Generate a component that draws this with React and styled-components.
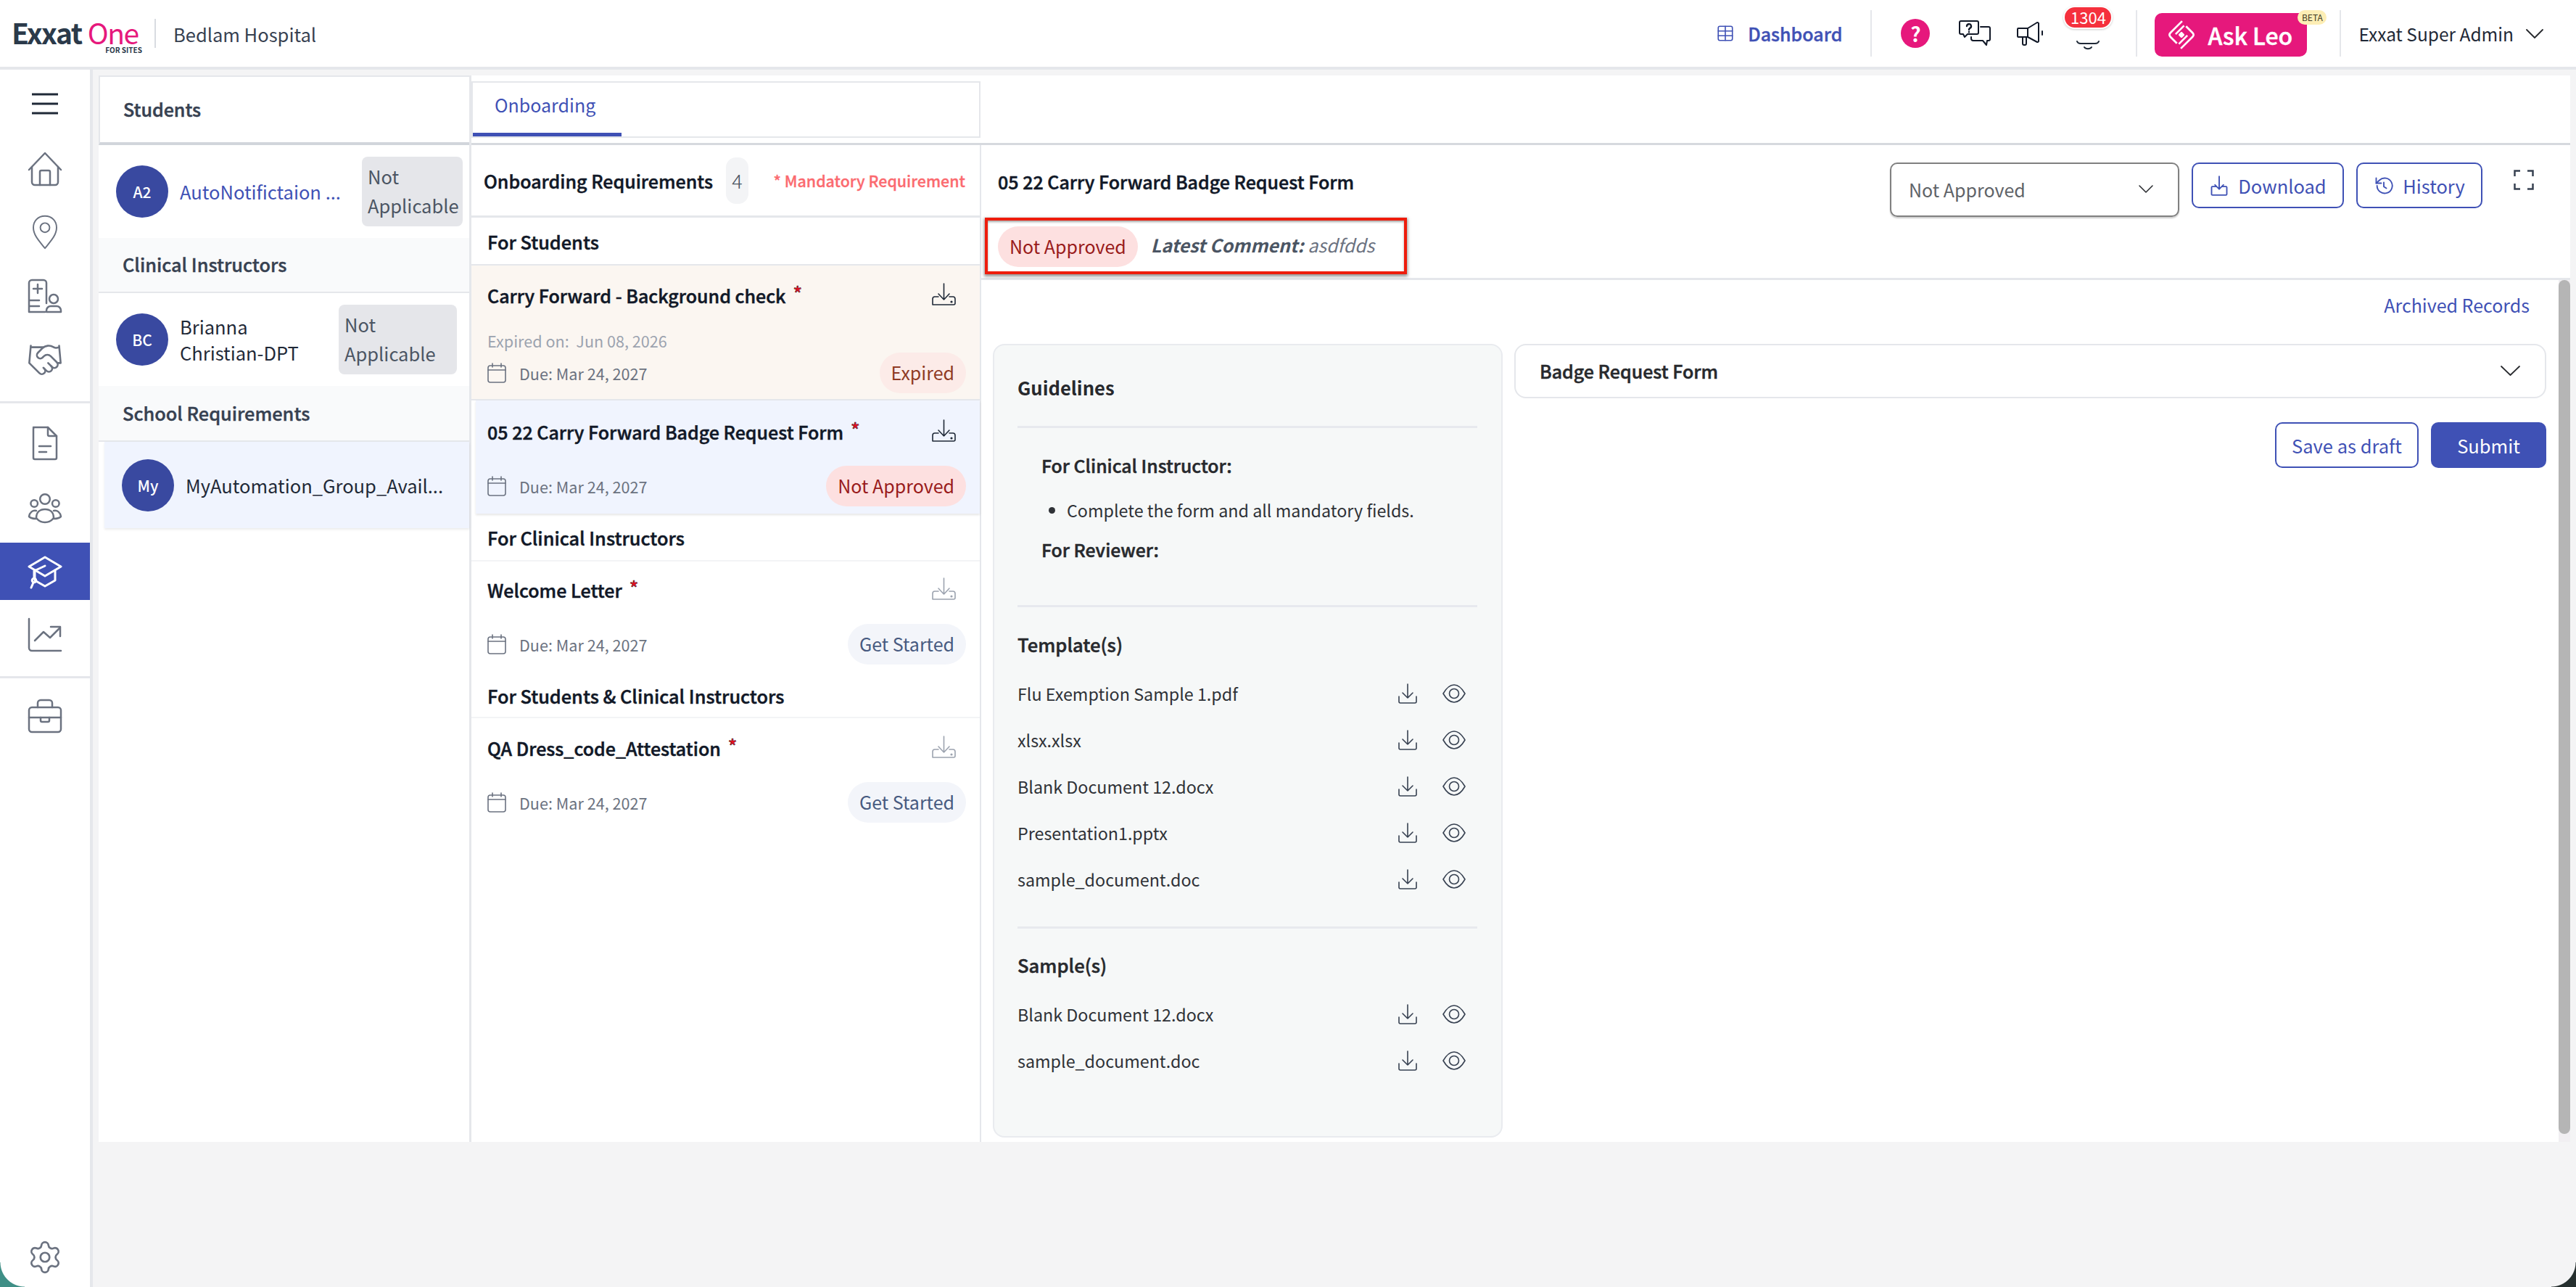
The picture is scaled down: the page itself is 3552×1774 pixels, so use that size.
import React from "react"
import styled, { createGlobalStyle } from "styled-components"
import { Handshake, Settings, Table } from "lucide-react"

const font = `"Noto Sans CJK SC", "Liberation Sans", sans-serif`

const GlobalStyle = createGlobalStyle`
  html, body { margin: 0; padding: 0; background: #f3f3f4; }
  * { box-sizing: border-box; }
  body { font-family: ${font}; color: #111827; }
`

const Page = styled.div`
  width: 3552px;
  height: 1774px;
  overflow: hidden;
  position: relative;
  background: #f4f4f5;
  display: flex;
  flex-direction: column;
`

/* ---------- top bar ---------- */
const TopBar = styled.header`
  height: 96px;
  flex: none;
  background: #fff;
  border-bottom: 4px solid #e5e7eb;
  display: flex;
  align-items: center;
  padding: 0 45px 0 16px;
`
const Logo = styled.div`
  position: relative;
  width: 180px;
  height: 34px;
  margin-bottom: 5px;
  display: flex;
  align-items: center;
  font-size: 39px;
  line-height: 34px;
  letter-spacing: -1.5px;
  white-space: nowrap;
`
const LogoDark = styled.span`
  color: #2b3a4a;
  font-weight: 600;
`
const LogoPink = styled.span`
  color: #e6187c;
  font-weight: 400;
  margin-left: 8px;
`
const LogoSub = styled.span`
  position: absolute;
  right: 0;
  top: 37px;
  font-size: 10px;
  line-height: 10px;
  letter-spacing: 0;
  color: #2b3a4a;
  font-weight: 600;
`
const LogoBar = styled.div`
  width: 2px;
  height: 40px;
  background: #d9dce1;
  margin: 0 24px 0 17px;
`
const HospitalName = styled.div`
  font-size: 25.5px;
  color: #374151;
`
const RightGroup = styled.div`
  margin-left: auto;
  display: flex;
  align-items: center;
`
const DashLink = styled.div`
  display: flex;
  align-items: center;
  gap: 18px;
  color: #3f51b5;
  font-size: 25px;
  font-weight: 500;
  -webkit-text-stroke: 0.4px #3f51b5;
`
const VLine = styled.div`
  width: 2px;
  height: 64px;
  background: #e5e7eb;
  margin: ${p => p.$m || "0"};
`
const HelpDot = styled.div`
  width: 40px;
  height: 40px;
  border-radius: 50%;
  background: #e6187c;
  color: #fff;
  font-weight: 700;
  font-size: 28px;
  line-height: 40px;
  text-align: center;
`
const IconSlot = styled.div`
  display: flex;
  margin-left: ${p => p.$ml}px;
`
const BellWrap = styled.div`
  position: relative;
  width: 64px;
  height: 60px;
  margin-left: 30px;
  margin-top: -12px;
  display: flex;
  justify-content: center;
  align-items: flex-end;
`
const CountBadge = styled.div`
  position: absolute;
  top: -2px;
  left: -2px;
  width: 68px;
  height: 32px;
  border-radius: 16px;
  background: #f5303d;
  border: 2px solid #fff;
  color: #fff;
  font-size: 22px;
  line-height: 27px;
  text-align: center;
  box-shadow: 0 1px 3px rgba(0,0,0,.2);
`
const LeoButton = styled.div`
  position: relative;
  width: 210px;
  height: 60px;
  margin-top: 4px;
  border-radius: 10px;
  background: #e6187c;
  color: #fff;
  display: flex;
  align-items: center;
  padding-left: 19px;
  gap: 18px;
  font-size: 32px;
  font-weight: 500;
  -webkit-text-stroke: 0.5px #fff;
`
const BetaTag = styled.span`
  position: absolute;
  top: -4px;
  right: -27px;
  width: 40px;
  height: 20px;
  border-radius: 10px;
  background: #fdeeb5;
  color: #3f3a22;
  font-size: 12px;
  line-height: 20px;
  text-align: center;
  font-weight: 400;
  -webkit-text-stroke: 0;
`
const AdminName = styled.div`
  display: flex;
  align-items: center;
  gap: 17px;
  font-size: 24.5px;
  color: #1f2937;
`

/* ---------- shell ---------- */
const Shell = styled.div`
  flex: 1;
  display: flex;
  min-height: 0;
`
const SideNav = styled.nav`
  width: 128px;
  flex: none;
  background: #fff;
  border-right: 4px solid #e5e7eb;
  display: flex;
  flex-direction: column;
  color: #6b7280;
`
const NavItem = styled.div`
  height: ${p => p.$h}px;
  flex: none;
  display: flex;
  align-items: center;
  justify-content: center;
  background: ${p => (p.$active ? "#3f51b5" : "transparent")};
  color: ${p => (p.$active ? "#fff" : "#6b7280")};
  margin-top: ${p => p.$mt || 0}px;
`
const NavRule = styled.div`
  height: 3px;
  flex: none;
  background: #e5e7eb;
  margin-top: ${p => p.$mt}px;
`
const NavSpacer = styled.div`
  flex: 1;
`
const Panel = styled.main`
  margin: 8px 8px 0 8px;
  flex: 1;
  height: 1470px;
  background: #fff;
  display: flex;
`

/* ---------- left list ---------- */
const ListCol = styled.section`
  width: 514px;
  flex: none;
  border-right: 3px solid #e5e7eb;
  display: flex;
  flex-direction: column;
`
const ListHead = styled.div`
  height: 96px;
  flex: none;
  border: 2px solid #e5e7eb;
  border-bottom: 4px solid #d1d5db;
  border-right: 0;
  display: flex;
  align-items: center;
  padding: 0 0 2px 32px;
  font-size: 25px;
  font-weight: 500;
  color: #374151;
  -webkit-text-stroke: 0.5px #374151;
`
const PersonRow = styled.div`
  height: ${p => p.$h}px;
  flex: none;
  display: flex;
  align-items: center;
  padding: 0 ${p => p.$pr || 9}px 0 24px;
  margin-left: ${p => (p.$selected ? 8 : 0)}px;
  background: ${p => (p.$selected ? "#f0f4fe" : "#fff")};
  box-shadow: ${p => (p.$selected ? "0 2px 3px rgba(0,0,0,.08)" : "none")};
`
const Avatar = styled.div`
  width: 72px;
  height: 72px;
  flex: none;
  border-radius: 50%;
  background: #3949a0;
  color: #fff;
  display: flex;
  align-items: center;
  justify-content: center;
  font-size: 21px;
  font-weight: 500;
  margin-right: 16px;
`
const PersonName = styled.div`
  flex: 1;
  min-width: 0;
  font-size: 25.5px;
  line-height: 36px;
  color: ${p => (p.$link ? "#3f51b5" : "#1f2937")};
  white-space: nowrap;
`
const GreyTag = styled.div`
  width: ${p => p.$w}px;
  height: 96px;
  flex: none;
  background: #e5e6ea;
  border-radius: 8px;
  padding: 7px 8px;
  font-size: 25.5px;
  line-height: 40px;
  color: #4b5563;
`
const GroupLabel = styled.div`
  height: ${p => p.$h}px;
  flex: none;
  background: #f9fafb;
  border-bottom: 2px solid #e5e7eb;
  display: flex;
  align-items: center;
  padding: 0 0 2px 33px;
  font-size: 25.3px;
  font-weight: 500;
  color: #374151;
  -webkit-text-stroke: 0.4px #374151;
`

/* ---------- tabs ---------- */
const RightCol = styled.div`
  flex: 1;
  min-width: 0;
  display: flex;
  flex-direction: column;
`
const TabBand = styled.div`
  height: 96px;
  flex: none;
  padding-top: 8px;
  border-bottom: 3px solid #d6d9de;
`
const TabBox = styled.div`
  width: 702px;
  height: 78px;
  border: 2px solid #e5e7eb;
`
const Tab = styled.div`
  width: 205px;
  height: 74px;
  border-bottom: 5px solid #3f51b5;
  padding: 10px 0 0 30px;
  font-size: 25px;
  line-height: 40px;
  color: #3f51b5;
`
const Columns = styled.div`
  flex: 1;
  min-height: 0;
  display: flex;
`

/* ---------- requirements ---------- */
const ReqCol = styled.section`
  width: 703px;
  flex: none;
  border-right: 2px solid #e5e7eb;
  display: flex;
  flex-direction: column;
`
const ReqHead = styled.div`
  height: 100px;
  flex: none;
  border-bottom: 3px solid #e5e7eb;
  display: flex;
  align-items: center;
  padding: 0 20px 0 17px;
  white-space: nowrap;
`
const ReqTitle = styled.div`
  font-size: 25px;
  font-weight: 500;
  color: #111827;
  -webkit-text-stroke: 0.5px #111827;
`
const CountChip = styled.div`
  width: 31px;
  height: 64px;
  margin-left: 18px;
  border-radius: 14px;
  background: #f3f4f6;
  color: #4b5563;
  font-size: 27px;
  font-weight: 300;
  line-height: 64px;
  text-align: center;
`
const Mandatory = styled.div`
  margin-left: auto;
  font-size: 21.4px;
  color: #fb6a6f;
  font-weight: 500;
  -webkit-text-stroke: 0.3px #fb6a6f;
`
const ReqGroup = styled.div`
  height: ${p => p.$h}px;
  flex: none;
  border-bottom: 2px solid ${p => p.$line || "#f3f4f6"};
  display: flex;
  align-items: center;
  padding: ${p => p.$pt || 0}px 0 0 22px;
  font-size: 25.3px;
  font-weight: 500;
  color: #111827;
  -webkit-text-stroke: 0.5px #111827;
`
const ReqCard = styled.div`
  flex: none;
  padding: ${p => p.$pt}px 19px ${p => p.$pb}px ${p => (p.$selected ? 16 : 22)}px;
  background: ${p => p.$bg || "#fff"};
  margin-left: ${p => (p.$selected ? 6 : 0)}px;
  border-bottom: ${p => (p.$line ? "2px solid #e5e7eb" : "0")};
  box-shadow: ${p => (p.$selected ? "0 2px 3px rgba(0,0,0,.1)" : "none")};
`
const CardTop = styled.div`
  height: 48px;
  display: flex;
  align-items: center;
  justify-content: space-between;
  padding-right: 14px;
`
const CardTitle = styled.div`
  font-size: 25px;
  font-weight: 500;
  color: #111827;
  -webkit-text-stroke: 0.5px #111827;
`
const Star = styled.span`
  color: #ee0f1f;
  margin-left: 10px;
  font-size: 26px;
  position: relative;
  top: -3px;
`
const ExpiredOn = styled.div`
  margin-top: 24px;
  margin-bottom: -24px;
  font-size: 21.6px;
  line-height: 32px;
  color: #9ca3af;
`
const CardFoot = styled.div`
  margin-top: 24px;
  height: 56px;
  display: flex;
  align-items: center;
  justify-content: space-between;
`
const DueDate = styled.div`
  display: flex;
  align-items: center;
  gap: 18px;
  font-size: 21.6px;
  color: #6b7280;
`
const StatusPill = styled.div`
  height: 56px;
  padding: 0 16px;
  border-radius: 28px;
  background: ${p => p.$bg};
  color: ${p => p.$color};
  font-size: 25px;
  line-height: 54px;
  white-space: nowrap;
`

/* ---------- detail ---------- */
const DetailCol = styled.section`
  flex: 1;
  min-width: 0;
  position: relative;
  display: flex;
  flex-direction: column;
`
const DetailHead = styled.div`
  height: 186px;
  flex: none;
  border-bottom: 3px solid #e5e7eb;
  display: flex;
  justify-content: space-between;
  padding: 0 50px 0 5px;
`
const HeadLeft = styled.div`
  display: flex;
  flex-direction: column;
`
const DetailTitle = styled.div`
  height: 100px;
  padding-left: 18px;
  display: flex;
  align-items: center;
  font-size: 25px;
  font-weight: 500;
  color: #111827;
  -webkit-text-stroke: 0.5px #111827;
`
const Outline = styled.div`
  width: 582px;
  height: 78px;
  border: 4px solid #ee1c0c;
  box-shadow: 0 2px 4px 1px rgba(60,60,60,.55), inset 0 2px 3px rgba(60,60,60,.45);
  padding: 8px 0 0 14px;
  display: flex;
  gap: 18px;
`
const LatestComment = styled.div`
  font-size: 25px;
  line-height: 50px;
  font-style: italic;
  color: #6b7280;
  white-space: nowrap;
  b {
    font-weight: 700;
    color: #4b5563;
  }
`
const HeadRight = styled.div`
  display: flex;
  align-items: flex-start;
  padding-top: 24px;
  gap: 17px;
`
const SelectBox = styled.div`
  width: 399px;
  height: 75px;
  border: 2px solid #808080;
  border-radius: 10px;
  box-shadow: 0 2px 2px rgba(0,0,0,.2);
  display: flex;
  align-items: center;
  justify-content: space-between;
  padding: 0 34px 2px 24px;
  font-size: 25px;
  color: #5f6368;
`
const OutlineBtn = styled.div`
  width: ${p => p.$w}px;
  height: 63px;
  border: 2px solid #3f51b5;
  border-radius: 10px;
  display: flex;
  align-items: center;
  justify-content: center;
  gap: 12px;
  color: #3f51b5;
  font-size: 25.5px;
  background: #fff;
`
const ExpandIcon = styled.div`
  margin: 10px 0 0 26px;
  display: flex;
  color: #374151;
`
const DetailBody = styled.div`
  flex: 1;
  min-height: 0;
  padding: 0 33px 0 16px;
  display: flex;
  flex-direction: column;
`
const ArchiveRow = styled.div`
  height: 88px;
  flex: none;
  padding: 12px 23px 0 0;
  text-align: right;
  font-size: 25px;
  line-height: 44px;
  color: #3f51b5;
`
const BodyGrid = styled.div`
  display: flex;
  gap: 16px;
  align-items: flex-start;
`
const GuideCard = styled.aside`
  width: 703px;
  height: 1094px;
  flex: none;
  background: #f6f8f8;
  border: 2px solid #e9ebef;
  border-radius: 16px;
  padding: 33px 33px 0 32px;
`
const GuideHeading = styled.div`
  font-size: 25.6px;
  line-height: ${p => p.$lh || 40}px;
  font-weight: ${p => (p.$strong ? 700 : 500)};
  -webkit-text-stroke: ${p => (p.$strong ? 0 : "0.5px #27292d")};
  color: #27292d;
  margin-top: ${p => p.$mt || 0}px;
  margin-bottom: ${p => p.$mb || 0}px;
`
const GuideRule = styled.div`
  height: 3px;
  background: #e7e9ee;
  margin-top: ${p => p.$mt || 0}px;
`
const GuideNote = styled.div`
  padding-left: 33px;
  font-size: 24.8px;
  line-height: 40px;
  font-weight: 500;
  -webkit-text-stroke: 0.5px #27292d;
  color: #27292d;
  margin-top: ${p => p.$mt}px;
`
const GuideBullet = styled.ul`
  margin: 22px 0 0;
  padding: 0 0 0 68px;
  font-size: 23.3px;
  line-height: 40px;
  color: #2f3237;
`
const FileList = styled.div`
  margin-top: 16px;
`
const FileRow = styled.div`
  height: 64px;
  display: flex;
  align-items: center;
  font-size: 23.3px;
  color: #2f3237;
`
const FileName = styled.div`
  flex: 1;
`
const FileActions = styled.div`
  display: flex;
  align-items: center;
  gap: 35px;
  padding-right: 16px;
  color: #374151;
`
const FormCol = styled.div`
  flex: 1;
  min-width: 0;
`
const Accordion = styled.div`
  height: 75px;
  border: 2px solid #e5e7eb;
  border-radius: 16px;
  display: flex;
  align-items: center;
  justify-content: space-between;
  padding: 0 34px 2px 33px;
  font-size: 25px;
  font-weight: 500;
  color: #27292d;
  -webkit-text-stroke: 0.5px #27292d;
`
const FormActions = styled.div`
  margin-top: 33px;
  display: flex;
  justify-content: flex-end;
  gap: 17px;
`
const SubmitBtn = styled.div`
  width: 159px;
  height: 63px;
  border-radius: 10px;
  background: #3f51b5;
  color: #fff;
  display: flex;
  align-items: center;
  justify-content: center;
  font-size: 25.5px;
`
const ScrollTrack = styled.div`
  position: absolute;
  top: 186px;
  right: 0;
  bottom: 0;
  width: 16px;
  background: #f1eff2;
`
const ScrollThumb = styled.div`
  height: 1177px;
  border-radius: 8px;
  background: #b5b5b5;
`
const WindowCorner = styled.div`
  position: absolute;
  bottom: 0;
  ${p => (p.$right ? "right: 0;" : "left: 0;")}
  width: 34px;
  height: 34px;
  background: radial-gradient(circle at ${p => (p.$right ? "top left" : "top right")}, transparent 33px, ${p => p.$color} 34px);
`

/* ---------- drawn icons ---------- */
const Ico = ({ size = 48, w, h, box = "0 0 24 24", sw = 1.25, children }) => (
  <svg width={w || size} height={h || size} viewBox={box} fill="none" stroke="currentColor" strokeWidth={sw} strokeLinecap="round" strokeLinejoin="round">
    {children}
  </svg>
)
const Chevron = ({ w = 24, h = 13, sw = 1.8 }) => (
  <svg width={w} height={h} viewBox={`0 0 ${w} ${h}`} fill="none" stroke="#27292d" strokeWidth={sw} strokeLinecap="round" strokeLinejoin="round">
    <path d={`M1 1 L${w / 2} ${h - 1} L${w - 1} 1`} />
  </svg>
)
const MenuIcon = () => (
  <svg width="36" height="30" viewBox="0 0 36 30" stroke="#1f2937" strokeWidth="3">
    <path d="M0 2h36M0 15h36M0 28h36" />
  </svg>
)
const HomeIcon = () => (
  <Ico><path d="M1 12.5 12 1l11 11.5" /><path d="M3 10.5V21a2 2 0 0 0 2 2h14a2 2 0 0 0 2-2V10.5" /><path d="M8.5 23v-9a1 1 0 0 1 1-1h5a1 1 0 0 1 1 1v9" /></Ico>
)
const PinIcon = () => (
  <Ico w={36} h={48} box="0 0 20 27" sw={1.1}><path d="M10 1C4.5 1 1 5 1 10c0 6 5 11 9 16 4-5 9-10 9-16 0-5-3.5-9-9-9Z" /><circle cx="10" cy="10" r="3.6" /></Ico>
)
const ClinicIcon = () => (
  <Ico><path d="M13 17V3a2 2 0 0 0-2-2H3a2 2 0 0 0-2 2v20h11M1 15h7M1 19h7" /><path d="M7 4v6M4 7h6" /><circle cx="18" cy="14" r="3" /><path d="M13 23v-1a3 3 0 0 1 3-3h4a3 3 0 0 1 3 3v1Z" /></Ico>
)
const DocIcon = () => (
  <Ico box="0 0 20 24"><path d="M2 1h10l6 6v15a1 1 0 0 1-1 1H3a1 1 0 0 1-1-1V2a1 1 0 0 1 1-1Z" /><path d="M12 1v5a1 1 0 0 0 1 1h5" /><path d="M6 14h8M6 18h5" /></Ico>
)
const PeopleIcon = () => (
  <Ico><circle cx="12" cy="6" r="3.4" /><circle cx="4.6" cy="9" r="2.4" /><circle cx="19.4" cy="9" r="2.4" /><path d="M6 19c0-4 2.5-6 6-6s6 2 6 6c-1.6 2-4 3-6 3s-4.4-1-6-3Z" /><path d="M6 14c-2.5-.5-4.5 1-5 4 1 1 3 1.5 5 1.5M18 14c2.5-.5 4.5 1 5 4-1 1-3 1.5-5 1.5" /></Ico>
)
const CapIcon = () => (
  <Ico sw={1.5}><path d="M1 8.5 12 2l11 6.5L12 15 1 8.5Z" /><path d="M5 11v7l7 4 7-4v-7" /><path d="M12 8 4.5 11.5v5" /><circle cx="4.5" cy="18" r="1.4" /><path d="M4 19.5 2.5 23" /></Ico>
)
const ChartIcon = () => (
  <Ico><path d="M1 1v20a2 2 0 0 0 2 2h20" /><path d="M5 16l6-6 4.5 4L22 7.5" /><path d="M16 6.5h6.5V13" /></Ico>
)
const CaseIcon = () => (
  <Ico><rect x="1" y="6" width="22" height="17" rx="2" /><path d="M7 6V3a2 2 0 0 1 2-2h6a2 2 0 0 1 2 2v3" /><path d="M1 13h22" /><path d="M9 13v2a1 1 0 0 0 1 1h4a1 1 0 0 0 1-1v-2" /></Ico>
)
const QuestionChatIcon = () => (
  <Ico w={44} h={36} box="0 0 44 36" sw={2}><path d="M3 1h22a2 2 0 0 1 2 2v14a2 2 0 0 1-2 2H12l-4 4-2-4H3a2 2 0 0 1-2-2V3a2 2 0 0 1 2-2Z" /><path d="M30 9h11a2 2 0 0 1 2 2v15a2 2 0 0 1-2 2h-2l-1 6-5-6H20a3 3 0 0 1-3-3v-2" /><path d="M11 8a3 3 0 1 1 4 3c-1 .5-1 1-1 2M14 16v.2" strokeWidth="2.4" /></Ico>
)
const MegaphoneIcon = () => (
  <Ico w={36} h={34} box="0 0 36 34" sw={2}><path d="M2 10h13l13-8a2 2 0 0 1 2 1v25a2 2 0 0 1-2 1L15 22H2a1 1 0 0 1-1-1V11a1 1 0 0 1 1-1Z" /><path d="M15 10v12M8 22v9a2 2 0 0 0 2 2h1a2 2 0 0 0 2-2v-9M35 14v5" /></Ico>
)
const BellBase = () => (
  <svg width="32" height="16" viewBox="0 0 32 16" fill="none" stroke="#1f2937" strokeWidth="2" strokeLinecap="round">
    <path d="M1 3c1 3 3 3 5 3h20c2 0 4 0 5-3M11 11c2 3 8 3 10 0" />
  </svg>
)
const LeoMark = () => (
  <svg width="36" height="42" viewBox="0 0 40 46" fill="none" stroke="#fff" strokeWidth="3" strokeLinejoin="round">
    <path d="M21 2 3 20c-2 2-2 4 0 6l10 10" />
    <path d="M19 44l18-18c2-2 2-4 0-6L27 10" />
    <path d="M20 20l3 3-3 3-3-3Z" fill="#fff" />
    <path d="M24 9 11 22M16 37l13-13" />
  </svg>
)
const TrayDownload = ({ faded }) => (
  <svg width="33" height="32" viewBox="0 0 33 32" fill="none" stroke={faded ? "#9ca3af" : "#1f2937"} strokeWidth="1.6" strokeLinecap="round" strokeLinejoin="round">
    <path d="M16.5 1v22M9 15l7.5 8 7.5-8" />
    <path d="M9 19H4a3 3 0 0 0-3 3v8h29a2 2 0 0 0 2-2v-6a3 3 0 0 0-3-3h-5" />
    <circle cx="27" cy="26" r=".8" />
  </svg>
)
const FileDownload = () => (
  <Ico w={26} h={28} box="0 0 26 28" sw={1.6}><path d="M13 1v19M6 13l7 7 7-7" /><path d="M1 18v7a2 2 0 0 0 2 2h20a2 2 0 0 0 2-2v-7" /></Ico>
)
const EyeIcon = () => (
  <Ico w={32} h={26} box="0 0 32 26" sw={1.6}><path d="M1 13C5 6 10 1 16 1s11 5 15 12c-4 7-9 12-15 12S5 20 1 13Z" /><circle cx="16" cy="13" r="6.5" /></Ico>
)
const CalendarIcon = () => (
  <svg width="26" height="28" viewBox="0 0 26 28" fill="none" stroke="#6b7280" strokeWidth="1.6" strokeLinecap="round">
    <rect x="1" y="4" width="24" height="23" rx="3" />
    <path d="M1 10h24M7 1v5M19 1v5" />
  </svg>
)
const SmallDownload = () => (
  <Ico size={28} sw={1.6}><path d="M12 1v15M7 11l5 5 5-5" /><path d="M8 13H4a1 1 0 0 0-1 1v8a1 1 0 0 0 1 1h16a1 1 0 0 0 1-1v-8a1 1 0 0 0-1-1h-4" /></Ico>
)
const HistoryIcon = () => (
  <Ico size={28} sw={1.6}><path d="M4 12a9 9 0 1 0 3-6.7L3 9" /><path d="M3 3v6h6" /><path d="M12 8v5l3 2" /></Ico>
)
const CornersIcon = () => (
  <svg width="28" height="28" viewBox="0 0 28 28" fill="none" stroke="currentColor" strokeWidth="2.5">
    <path d="M1.5 9V1.5H9M19 1.5h7.5V9M26.5 19v7.5H19M9 26.5H1.5V19" />
  </svg>
)

const templates = ["Flu Exemption Sample 1.pdf", "xlsx.xlsx", "Blank Document 12.docx", "Presentation1.pptx", "sample_document.doc"]
const samples = ["Blank Document 12.docx", "sample_document.doc"]

const Files = ({ names }) => (
  <FileList>
    {names.map(name => (
      <FileRow key={name}>
        <FileName>{name}</FileName>
        <FileActions>
          <FileDownload />
          <EyeIcon />
        </FileActions>
      </FileRow>
    ))}
  </FileList>
)

const Requirement = ({ title, faded, status, expired, bg, selected, line, pt, pb }) => (
  <ReqCard $bg={bg} $selected={selected} $line={line} $pt={pt} $pb={pb}>
    <CardTop>
      <CardTitle>{title}<Star>*</Star></CardTitle>
      <TrayDownload faded={faded} />
    </CardTop>
    {expired && <ExpiredOn>Expired on:&nbsp; Jun 08, 2026</ExpiredOn>}
    <CardFoot>
      <DueDate><CalendarIcon />Due: Mar 24, 2027</DueDate>
      {status}
    </CardFoot>
  </ReqCard>
)

const getStarted = <StatusPill $bg="#f3f5fa" $color="#475a80">Get Started</StatusPill>

export default function App() {
  return (
    <Page>
      <GlobalStyle />
      <TopBar>
        <Logo><LogoDark>Exxat</LogoDark><LogoPink>One</LogoPink><LogoSub>FOR SITES</LogoSub></Logo>
        <LogoBar />
        <HospitalName>Bedlam Hospital</HospitalName>
        <RightGroup>
          <DashLink><Table size={26} strokeWidth={1.5} />Dashboard</DashLink>
          <VLine $m="0 40px 0 39px" />
          <HelpDot>?</HelpDot>
          <IconSlot $ml={40}><QuestionChatIcon /></IconSlot>
          <IconSlot $ml={36}><MegaphoneIcon /></IconSlot>
          <BellWrap><CountBadge>1304</CountBadge><BellBase /></BellWrap>
          <VLine $m="0 24px 0 34px" />
          <LeoButton><LeoMark />Ask Leo<BetaTag>BETA</BetaTag></LeoButton>
          <VLine $m="0 24px 0 45px" />
          <AdminName>Exxat Super Admin<Chevron /></AdminName>
        </RightGroup>
      </TopBar>
      <Shell>
        <SideNav>
          <NavItem $h={94}><MenuIcon /></NavItem>
          <NavItem $h={86}><HomeIcon /></NavItem>
          <NavItem $h={88}><PinIcon /></NavItem>
          <NavItem $h={88}><ClinicIcon /></NavItem>
          <NavItem $h={88}><Handshake size={52} strokeWidth={1.2} /></NavItem>
          <NavRule $mt={13} />
          <NavItem $h={110}><DocIcon /></NavItem>
          <NavItem $h={68}><PeopleIcon /></NavItem>
          <NavItem $h={79} $active $mt={14}><CapIcon /></NavItem>
          <NavItem $h={96}><ChartIcon /></NavItem>
          <NavRule $mt={9} />
          <NavItem $h={104}><CaseIcon /></NavItem>
          <NavSpacer />
          <NavItem $h={82}><Settings size={50} strokeWidth={1.3} /></NavItem>
        </SideNav>
        <Panel>
          <ListCol>
            <ListHead>Students</ListHead>
            <PersonRow $h={128}>
              <Avatar>A2</Avatar>
              <PersonName $link>AutoNotifictaion ...</PersonName>
              <GreyTag $w={139}>Not Applicable</GreyTag>
            </PersonRow>
            <GroupLabel $h={76}>Clinical Instructors</GroupLabel>
            <PersonRow $h={128} $pr={17}>
              <Avatar>BC</Avatar>
              <PersonName>Brianna<br />Christian-DPT</PersonName>
              <GreyTag $w={163}>Not Applicable</GreyTag>
            </PersonRow>
            <GroupLabel $h={77}>School Requirements</GroupLabel>
            <PersonRow $h={119} $selected>
              <Avatar>My</Avatar>
              <PersonName>MyAutomation_Group_Avail...</PersonName>
            </PersonRow>
          </ListCol>
          <RightCol>
            <TabBand>
              <TabBox><Tab>Onboarding</Tab></TabBox>
            </TabBand>
            <Columns>
              <ReqCol>
                <ReqHead>
                  <ReqTitle>Onboarding Requirements</ReqTitle>
                  <CountChip>4</CountChip>
                  <Mandatory>* Mandatory Requirement</Mandatory>
                </ReqHead>
                <ReqGroup $h={66} $pt={2} $line="#e5e7eb">For Students</ReqGroup>
                <Requirement title="Carry Forward - Background check" expired bg="#fbf6f1" line pt={16} pb={8}
                  status={<StatusPill $bg="#fcebe8" $color="#8f3a24">Expired</StatusPill>} />
                <Requirement title="05 22 Carry Forward Badge Request Form" bg="#f0f4fe" selected pt={18} pb={10}
                  status={<StatusPill $bg="#fde0e0" $color="#991b1b">Not Approved</StatusPill>} />
                <ReqGroup $h={66} $pt={2}>For Clinical Instructors</ReqGroup>
                <Requirement title="Welcome Letter" faded pt={14} pb={9} status={getStarted} />
                <ReqGroup $h={65} $pt={4}>For Students &amp; Clinical Instructors</ReqGroup>
                <Requirement title="QA Dress_code_Attestation" faded pt={16} pb={9} status={getStarted} />
              </ReqCol>
              <DetailCol>
                <DetailHead>
                  <HeadLeft>
                    <DetailTitle>05 22 Carry Forward Badge Request Form</DetailTitle>
                    <Outline>
                      <StatusPill $bg="#fde0e0" $color="#991b1b">Not Approved</StatusPill>
                      <LatestComment><b>Latest Comment:</b> asdfdds</LatestComment>
                    </Outline>
                  </HeadLeft>
                  <HeadRight>
                    <SelectBox>Not Approved<Chevron w={20} h={11} sw={1.5} /></SelectBox>
                    <OutlineBtn $w={210}><SmallDownload />Download</OutlineBtn>
                    <OutlineBtn $w={174}><HistoryIcon />History</OutlineBtn>
                    <ExpandIcon><CornersIcon /></ExpandIcon>
                  </HeadRight>
                </DetailHead>
                <DetailBody>
                  <ArchiveRow>Archived Records</ArchiveRow>
                  <BodyGrid>
                    <GuideCard>
                      <GuideHeading $strong $lh={50} $mb={28}>Guidelines</GuideHeading>
                      <GuideRule />
                      <GuideNote $mt={31}>For Clinical Instructor:</GuideNote>
                      <GuideBullet><li>Complete the form and all mandatory fields.</li></GuideBullet>
                      <GuideNote $mt={14}>For Reviewer:</GuideNote>
                      <GuideRule $mt={57} />
                      <GuideHeading $mt={31}>Template(s)</GuideHeading>
                      <Files names={templates} />
                      <GuideRule $mt={33} />
                      <GuideHeading $mt={30}>Sample(s)</GuideHeading>
                      <Files names={samples} />
                    </GuideCard>
                    <FormCol>
                      <Accordion>Badge Request Form<Chevron w={27} h={14} /></Accordion>
                      <FormActions>
                        <OutlineBtn $w={198}>Save as draft</OutlineBtn>
                        <SubmitBtn>Submit</SubmitBtn>
                      </FormActions>
                    </FormCol>
                  </BodyGrid>
                </DetailBody>
                <ScrollTrack><ScrollThumb /></ScrollTrack>
              </DetailCol>
            </Columns>
          </RightCol>
        </Panel>
      </Shell>
      <WindowCorner $color="#3f8f86" />
      <WindowCorner $right $color="#26302f" />
    </Page>
  )
}
